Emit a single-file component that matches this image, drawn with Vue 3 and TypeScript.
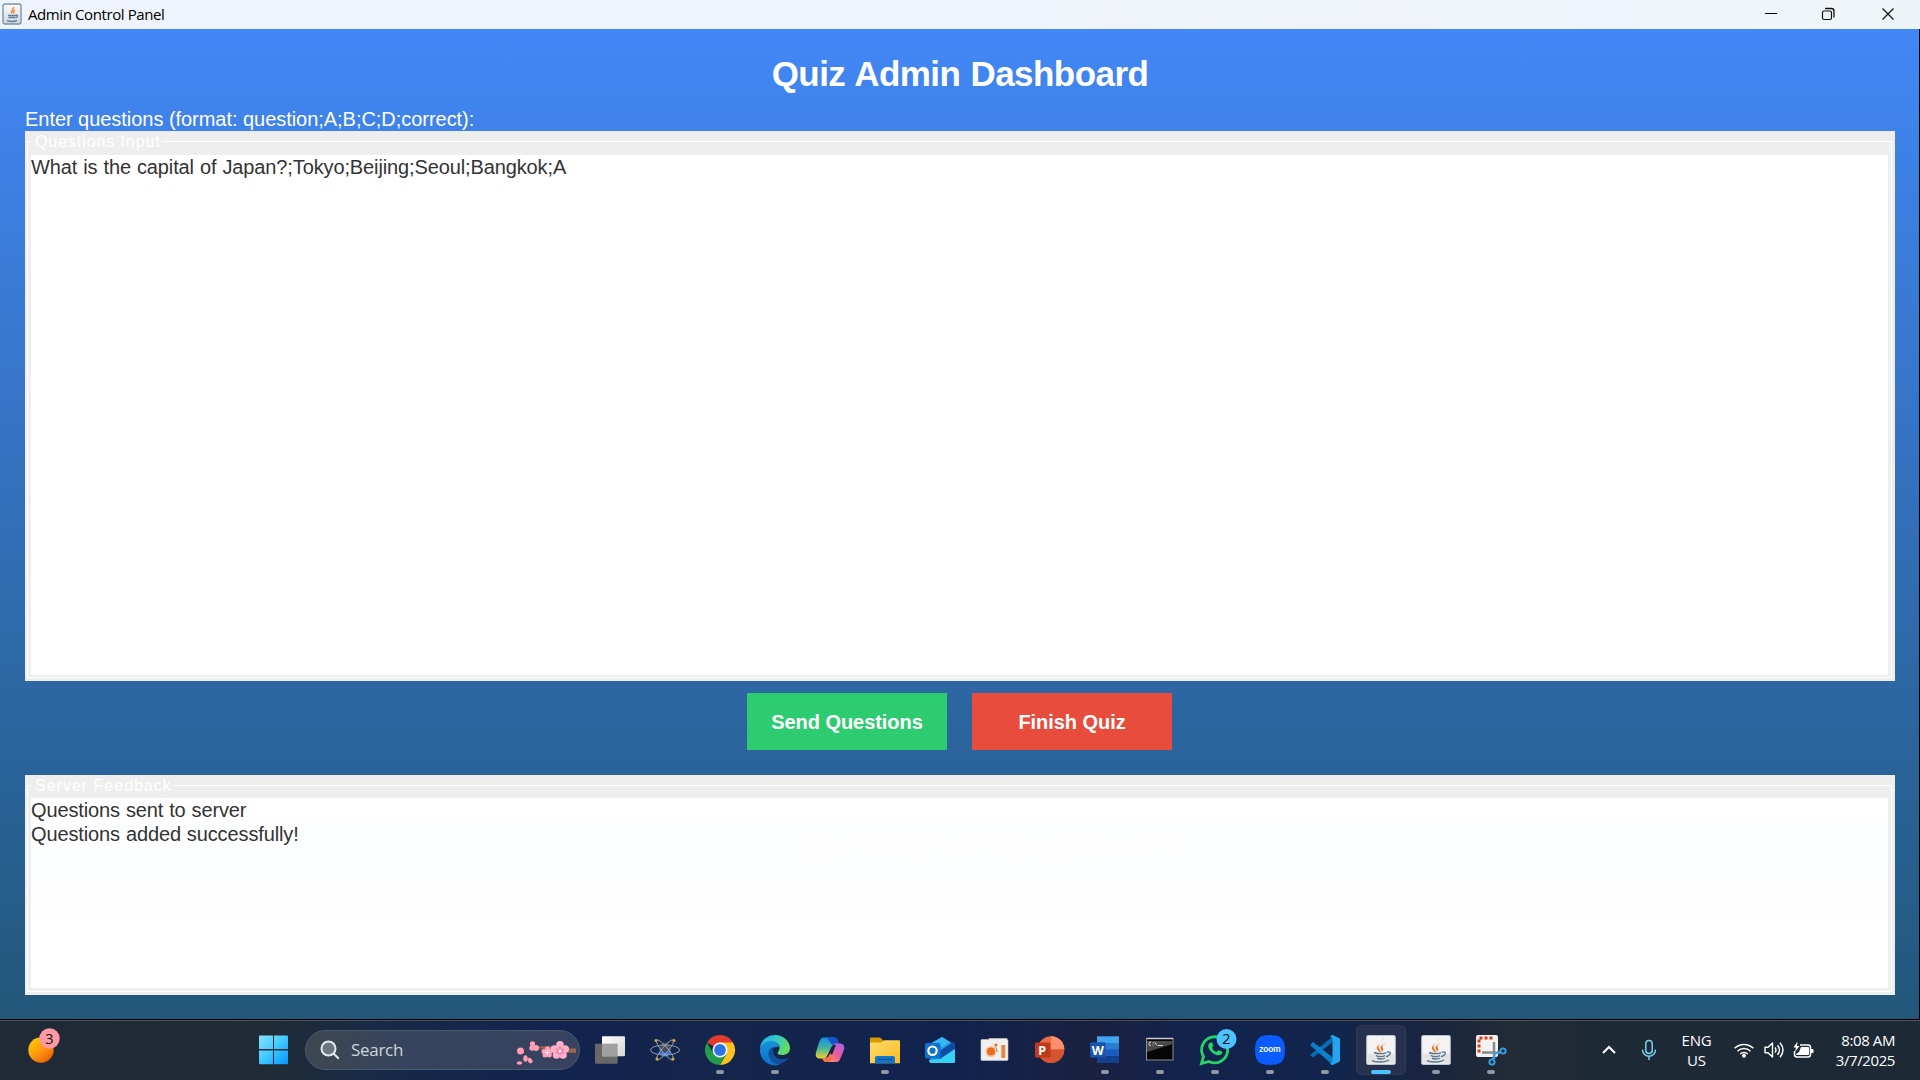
<script setup lang="ts">
import { ref } from 'vue'

const questions = ref('What is the capital of Japan?;Tokyo;Beijing;Seoul;Bangkok;A')
const feedback = ref<string[]>(['Questions sent to server', 'Questions added successfully!'])
</script>

<template>
  <div class="screen">
    <header class="titlebar">
      <svg class="app-icon" width="20" height="22" viewBox="0 0 20 22">
        <defs>
          <linearGradient id="tile" x1="0" y1="0" x2="0" y2="1">
            <stop offset="0" stop-color="#fafafa" />
            <stop offset="1" stop-color="#d3d9de" />
          </linearGradient>
        </defs>
        <rect x="1" y="1" width="18" height="20" rx="2" fill="url(#tile)" stroke="#7e93a3" stroke-width="1.4" />
        <path d="M11.5 4c1 2.500-3.500 3.500-1.500 6.500M13 7c-1.500 1-2 2-1 3.500" fill="none" stroke="#ef8a2d" stroke-width="1.500" />
        <path d="M6 12.500h8M6.500 14.500h6.500M14 12.300c2.500-.5 2 2-.7 2.500M5 17.500c3 1.200 7 1.200 10 0" fill="none" stroke="#5b83a4" stroke-width="1.400" />
      </svg>
      <span class="caption">Admin Control Panel</span>
      <div class="controls">
        <svg width="59" height="29" viewBox="0 0 59 29"><path d="M24 13.500h12" stroke="#000" /></svg>
        <svg width="59" height="29" viewBox="0 0 59 29" fill="none" stroke="#111">
          <rect x="22.500" y="11" width="9" height="8.500" rx="1.500" stroke-width="1.200" />
          <path d="M25 8.500h6.500a2.500 2.500 0 0 1 2.500 2.500v6.500" stroke-width="1.300" />
        </svg>
        <svg width="59" height="29" viewBox="0 0 59 29"><path d="M23.500 8.500l11 11M34.500 8.500l-11 11" stroke="#111" stroke-width="1.200" /></svg>
      </div>
    </header>

    <main class="dashboard">
      <h1>Quiz Admin Dashboard</h1>
      <label class="prompt">Enter questions (format: question;A;B;C;D;correct):</label>
      <section class="group questions">
        <div class="frame">
          <div class="legend"><span>Questions Input</span></div>
          <div class="area"><p class="entry">{{ questions }}</p></div>
        </div>
      </section>
      <div class="actions">
        <button class="send" type="button">Send Questions</button>
        <button class="finish" type="button">Finish Quiz</button>
      </div>
      <section class="group feedback">
        <div class="frame">
          <div class="legend"><span>Server Feedback</span></div>
          <div class="area">
            <p v-for="line in feedback" :key="line">{{ line }}</p>
            <div class="ghost" aria-hidden="true">Quiz Admin Dashboard</div>
          </div>
        </div>
      </section>
    </main>

    <footer class="taskbar">
      <div class="widgets">
        <svg width="34" height="36" viewBox="0 0 34 36">
          <defs>
            <linearGradient id="sun" x1=".1" y1="0" x2=".9" y2="1">
              <stop offset="0" stop-color="#ffd000" />
              <stop offset=".5" stop-color="#fb9a10" />
              <stop offset="1" stop-color="#e65300" />
            </linearGradient>
          </defs>
          <circle cx="15" cy="23" r="12.700" fill="url(#sun)" />
          <circle cx="23.500" cy="11.500" r="10.200" fill="#ff99a4" />
          <text x="23.500" y="16.700" text-anchor="middle" class="badge-text">3</text>
        </svg>
      </div>

      <svg class="start" width="30" height="30" viewBox="0 0 30 30">
        <defs>
          <linearGradient id="win" gradientUnits="userSpaceOnUse" x1="0" y1="0" x2="30" y2="30">
            <stop offset="0" stop-color="#8be0ff" />
            <stop offset=".45" stop-color="#44ccff" />
            <stop offset="1" stop-color="#0091ff" />
          </linearGradient>
        </defs>
        <path fill="url(#win)" d="M1 .5h13V14H0V1.500a1 1 0 0 1 1-1zM15 .5h13a1 1 0 0 1 1 1V14H15zM0 15.500h14v13.800H1a1 1 0 0 1-1-1zM15 15.500h14v12.800a1 1 0 0 1-1 1H15z" />
      </svg>

      <div class="search">
        <svg width="20" height="20" viewBox="0 0 20 20" fill="none" stroke="#e4e8ee" stroke-width="2">
          <circle cx="8.500" cy="8.500" r="7" fill="#6b7580" />
          <path d="M13.500 13.500l5.300 5.300" />
        </svg>
        <span>Search</span>
        <svg class="blossom" width="62" height="26" viewBox="0 0 62 26">
          <path d="M60 7.500v4.500c-9-1-18 1-25-2.500-5-1-10-2-17-3.500 10-1 18-1 24 1z" fill="#9a6549" />
          <path d="M1 10l6-2M17 6l12 4" stroke="#70503f" stroke-width="1" />
          <g fill="#ff9db3">
            <circle cx="4.500" cy="10" r="3.500" /><circle cx="16.500" cy="2.800" r="2.600" /><circle cx="20" cy="7" r="3" /><circle cx="16" cy="7" r="2.700" />
            <ellipse cx="3.500" cy="22" rx="2.800" ry="1.700" /><ellipse cx="9.500" cy="17.500" rx="2.200" ry="3.200" /><ellipse cx="14" cy="19.500" rx="2.200" ry="2.900" transform="rotate(-35 14 19.500)" />
          </g>
          <g fill="#ff9fb9">
            <circle cx="31.500" cy="7.700" r="2.500" /><circle cx="28" cy="10.500" r="2.500" /><circle cx="29" cy="14" r="2.500" /><circle cx="33.300" cy="14" r="2.500" /><circle cx="34.500" cy="10.200" r="2.500" />
          </g>
          <g fill="#ffb0c8">
            <circle cx="44" cy="3.800" r="3.800" /><circle cx="38.500" cy="8" r="3.800" /><circle cx="40.500" cy="14" r="3.800" /><circle cx="47" cy="14" r="3.800" /><circle cx="49.200" cy="8" r="3.800" />
          </g>
          <circle cx="44" cy="10" r="4" fill="#ff9cba" />
          <path d="M31.300 9v5M28.800 11.300h5" stroke="#fff" stroke-width="1" />
          <path d="M44 5.500v8M40 8l8 4M40 12l8-4" stroke="#d8508c" stroke-width=".7" />
          <circle cx="44" cy="10" r="1.500" fill="#fff" />
        </svg>
      </div>

      <nav class="apps">
        <div class="app">
          <svg viewBox="-24 -24 48 48">
            <defs>
              <linearGradient id="tv" x1="0" y1="0" x2="1" y2="1"><stop offset="0" stop-color="#fff" /><stop offset="1" stop-color="#d6d6d6" /></linearGradient>
            </defs>
            <rect x="-15" y="-6.300" width="22.700" height="20" rx="1" fill="#686868" />
            <rect x="-8" y="-13.700" width="23" height="20" rx="1" fill="url(#tv)" />
            <rect x="-8" y="-6.300" width="15.700" height="12.600" fill="#a0a0a0" />
          </svg>
        </div>

        <div class="app">
          <svg viewBox="-24 -24 48 48">
            <circle cy="0" r="6" fill="#2a4f9c" />
            <circle cy="-2.500" r="5" fill="#454d5a" />
            <path d="M-6 1.500a6 5 0 0 0 12 0q-6 2-12 0z" fill="#3678e5" />
            <g fill="none" stroke="#a2a7b4" stroke-width=".9">
              <ellipse rx="14.500" ry="5" />
              <ellipse rx="13" ry="3" transform="rotate(50)" />
              <ellipse rx="13" ry="3" transform="rotate(-50)" />
            </g>
            <g fill="#dba542"><circle cx="-9" cy="-9.500" r="1.500" /><circle cx="9" cy="-9.500" r="1.500" /><circle cx="-8" cy="9" r="1.500" /><circle cx="8" cy="9" r="1.500" /></g>
          </svg>
        </div>

        <div class="app running">
          <svg viewBox="-24 -24 48 48">
            <path d="M0 0L-13-7.500A15 15 0 0 1 13-7.500z" fill="#e33b2e" />
            <path d="M0-7.500H13A15 15 0 0 1 0 15L6.500 3.700z" fill="#fcc31e" />
            <path d="M-13-7.500A15 15 0 0 0 0 15L6.500 3.700-6.500 3.700z" fill="#229b4c" />
            <circle r="7.500" fill="#fff" /><circle r="5.900" fill="#2a75e6" />
          </svg>
        </div>

        <div class="app running">
          <svg viewBox="-24 -24 48 48">
            <defs>
              <linearGradient id="edge1" x1="0" y1=".3" x2="1" y2=".6"><stop offset="0" stop-color="#25b1e8" /><stop offset=".5" stop-color="#35c9c2" /><stop offset="1" stop-color="#6be04e" /></linearGradient>
              <linearGradient id="edge2" x1=".3" y1="0" x2=".3" y2="1"><stop offset="0" stop-color="#1793da" /><stop offset="1" stop-color="#0b6fd0" /></linearGradient>
            </defs>
            <path d="M-15-1C-15-9-8-15 0-15 9-15 15-8 15-2c0 5-4 7-8 7-4 0-5-1.500-4-3C7-4 3-8-3-8c-7 0-11 4-12 7z" fill="url(#edge1)" />
            <path d="M-15 0c1-6 6-9 11-9 4 0 8 2 8 6C-1-4-4-1-4 4c0 5 4 10 9 10.500A15 15 0 0 1-15 0z" fill="url(#edge2)" />
            <path d="M-2-3c-5 2-6 8-3 12 3 5 9 7 14 3 2-1 4-3 4-4-1-.500-4 2-8 1C0 8-3 3-2-3z" fill="#11509b" />
          </svg>
        </div>

        <div class="app">
          <svg viewBox="-24 -24 48 48">
            <defs>
              <linearGradient id="cop1" x1="0" y1="0" x2="0" y2="1"><stop offset="0" stop-color="#168be8" /><stop offset=".5" stop-color="#42b69a" /><stop offset="1" stop-color="#f5cc2d" /></linearGradient>
              <linearGradient id="cop2" x1="1" y1="0" x2="0" y2="1"><stop offset="0" stop-color="#a65df4" /><stop offset=".5" stop-color="#f05b93" /><stop offset="1" stop-color="#ffaf66" /></linearGradient>
            </defs>
            <path d="M-6-12.500H4c2 0 3 1 4 4L9-5H5C2-5 1-3 0 0L-3 6c-1 2-2 2.500-4 2.500h-3c-3 0-5-2-4-6l3-10c1-3 2-5 5-5z" fill="url(#cop1)" />
            <path d="M-3-12.500H4c2 0 3 1 4 4L9-5H4C1-5 0-8-3-12.500z" fill="#1753cb" />
            <path d="M6 12H-4c-2 0-3-2-4-4h3c3 0 4-2 5-5L3-4c1-2 2-2.500 4-2.500h3c3 0 5 2 4 6L11 7c-1 3-2 5-5 5z" fill="url(#cop2)" />
            <path d="M-1 3l4-8h3L2 5z" fill="#18204a" />
            <path d="M-8 8h4c2 0 4-2 5-5l1 6-3 3h-3c-2 0-3-2-4-4z" fill="#f07542" />
          </svg>
        </div>

        <div class="app running">
          <svg viewBox="-24 -24 48 48">
            <defs><linearGradient id="fold" x1="0" y1="0" x2="1" y2="1"><stop offset="0" stop-color="#ffdc6c" /><stop offset="1" stop-color="#fdbb22" /></linearGradient></defs>
            <path d="M-15-11.500q0-1 1-1h9l3 2.700V-5h-13z" fill="#d89800" />
            <path d="M-15-7.500h11l3-2.200H14q1 0 1 1v22h-30z" fill="url(#fold)" />
            <path d="M-10 13.300V8q0-2 2-2H8q2 0 2 2v5.300z" fill="#1277c9" />
            <path d="M-7 9.500H7" stroke="#0a4f91" stroke-width="1.200" />
          </svg>
        </div>

        <div class="app">
          <svg viewBox="-24 -24 48 48">
            <path d="M-10-6L2-13 15-5V13H-10z" fill="#279de4" />
            <path d="M-10-6L2-13l8 5-15 9z" fill="#33b8f3" />
            <path d="M-5 4L13-8l2 1v6L0 9z" fill="#104ca5" />
            <path d="M15-1v12q0 2-2 2H-8q-3 0-3-3L0 9z" fill="#34d1f3" />
            <rect x="-15" y="-7" width="15.500" height="15.500" rx="1.500" fill="#0b73ce" />
            <circle cx="-7.500" cy=".7" r="4.200" fill="none" stroke="#fff" stroke-width="2.200" />
          </svg>
        </div>

        <div class="app">
          <svg viewBox="-24 -24 48 48">
            <path d="M-14-9.500q0-1 1-1h7v-1h18v1q1 0 1 1V9.500q0 1-1 1h-25q-1 0-1-1z" fill="#f1efed" stroke="#c7c9ce" stroke-width=".6" />
            <circle cx="-4" cy="1.500" r="4.800" fill="#eb6d1a" stroke="#f7c7a5" stroke-width="1.500" />
            <path d="M0-3a5 5 0 0 1 2 5" fill="none" stroke="#8c8c8c" />
            <circle cx="1" cy="-5" r="1.600" fill="#eb6d1a" />
            <rect x="6.300" y="-5" width="4" height="13" fill="#ed8440" />
          </svg>
        </div>

        <div class="app">
          <svg viewBox="-24 -24 48 48">
            <circle cx="1" cy="-.5" r="13.300" fill="#ec6c47" />
            <path d="M1-13.800A13.300 13.300 0 0 1 14.300-.5H1z" fill="#ff8f6b" />
            <path d="M-12.300-.5H14.300A13.300 13.300 0 0 1-12.300-.5z" fill="#d6532f" />
            <rect x="-15" y="-7.500" width="15.500" height="15" rx="1.300" fill="#c13b1b" />
            <text x="-7.800" y="4.500" text-anchor="middle" class="glyph">P</text>
          </svg>
        </div>

        <div class="app running">
          <svg viewBox="-24 -24 48 48">
            <rect x="-8" y="-13.700" width="22" height="6.800" fill="#43a5ee" />
            <rect x="-8" y="-7" width="22" height="6.800" fill="#2a7cd5" />
            <rect x="-8" y="-.3" width="22" height="6.800" fill="#1b5dbe" />
            <rect x="-8" y="6.300" width="22" height="6.700" fill="#14418f" />
            <rect x="-15" y="-7.700" width="15.500" height="15.200" rx="1.300" fill="#1955b0" />
            <text x="-7.300" y="4.500" text-anchor="middle" class="glyph">W</text>
          </svg>
        </div>

        <div class="app running">
          <svg viewBox="-24 -24 48 48">
            <rect x="-13.500" y="-11.500" width="26.500" height="21.500" fill="#050505" stroke="#8d9095" />
            <path d="M-13-9H12.500V-6L-13 2z" fill="#4a4a4a" />
            <path d="M-13.500-11.500H13" stroke="#c9ccd0" stroke-width="1.500" />
            <path d="M-9-8h-1.500q-1 2 0 3.500H-9M-7-7.500v.9M-7-5.400v.9M-5.500-8l2.500 3.500M-2-4.500h5" fill="none" stroke="#ddd" stroke-width=".9" />
          </svg>
        </div>

        <div class="app running">
          <svg viewBox="-24 -24 48 48">
            <path d="M-13.500 13.500l2-7A13 13 0 1 1-6 11.500z" fill="none" stroke="#25d366" stroke-width="2.800" />
            <path d="M-4.500-7.500c-3 1.500-3 5 0 8.500s7 5.500 10.500 3.500c1.500-1 1.500-2.500 1-3L3.500 0 1.500 2C-1 1-2-.5-3-2.500l1.500-2L-3-7.500z" fill="#25d366" />
            <circle cx="11.500" cy="-11" r="10" fill="#4cc2ff" />
            <text x="11.500" y="-5.700" text-anchor="middle" class="badge-text">2</text>
          </svg>
        </div>

        <div class="app running">
          <svg viewBox="-24 -24 48 48">
            <path d="M0-15C11-15 15-11 15 0S11 15 0 15-15 11-15 0-11-15 0-15z" fill="#0b5cff" />
            <text x="0" y="2" text-anchor="middle" class="zoom-text" textLength="21.500" lengthAdjust="spacingAndGlyphs">zoom</text>
          </svg>
        </div>

        <div class="app running">
          <svg viewBox="-24 -24 48 48">
            <path d="M-15 5l3 2.500L9-9v-5.500z" fill="#0a6cb2" />
            <path d="M-15-5l3-3L9 8.500V15L6 13.500z" fill="#0e7fc9" />
            <path d="M7.500-15l6.500 3q1 .5 1 1.500v21q0 1-1 1.500L7.500 15q-1.500 0-2.500-1.500L7.500 12V-12L5-13.500Q6-15 7.500-15z" fill="#24a5ef" />
          </svg>
        </div>

        <div v-for="n in 2" :key="n" class="app running" :class="{ active: n === 1 }">
          <svg viewBox="-24 -24 48 48">
            <rect x="-14.300" y="-14.500" width="28.600" height="29" rx="1.500" fill="#f3f3f3" stroke="#b9c4cd" />
            <path d="M-13.500 4h27v9.500h-27z" fill="#e3e3e3" />
            <path d="M2-12.500C4-8-4.500-6-2-1.500-.5 1 0 2 0 3c-4-3-5.500-5-3-7.500S2.500-8 2-12.500zM5-7C1-5 1-4 2-2 3 0 1.500 1.500.5 2c1-2-2-3-1-5S3-6.500 5-7z" fill="#e9782b" />
            <path d="M-7 2.500C-4 4 3 4 5.500 2.500M-5 5.500C-3 7 2 7 4 5.500M-4 8.200C-2 9.300 2 9.300 4 8M-9 10.500c3 2 13 2 17-.5M6 2.200c5-1.500 4 3-1 4.500" fill="none" stroke="#57778f" stroke-width="1.400" />
          </svg>
        </div>

        <div class="app running">
          <svg viewBox="-24 -24 48 48">
            <rect x="-15" y="-15" width="22" height="22" rx="2" fill="#f2f2f2" />
            <path d="M-12 2.500V-12H2" fill="none" stroke="#d83b12" stroke-width="3" stroke-dasharray="3 2" />
            <path d="M-9 2.500H9M3-8V9" fill="none" stroke="#878b90" stroke-width="2.500" />
            <g fill="none" stroke="#2fa3e6" stroke-width="1.900"><circle cx="12" cy="1" r="2.600" /><circle cx="1" cy="12" r="2.600" /><path d="M9.500 2L4 3.500 2 9.500" /></g>
          </svg>
        </div>
      </nav>

      <div class="tray">
        <svg class="chevron" width="16" height="12" viewBox="0 0 16 12"><path d="M2 9l6-6 6 6" fill="none" stroke="#fff" stroke-width="2" /></svg>
        <svg class="mic" width="16" height="22" viewBox="0 0 16 22" fill="none" stroke="#78cfe8" stroke-width="1.500">
          <rect x="4.800" y="1.500" width="6.400" height="13" rx="3.200" /><path d="M1.500 10.500c0 9 13 9 13 0M8 17.500V21" />
        </svg>
        <div class="lang"><span>ENG</span><span>US</span></div>
        <svg class="wifi" width="20" height="16" viewBox="0 0 20 16" fill="none" stroke="#fff" stroke-width="1.500">
          <path d="M.7 6.300a13.200 13.200 0 0 1 18.600 0M3.500 9.200a9.200 9.200 0 0 1 13 0M6.200 12a5.400 5.400 0 0 1 7.600 0" /><circle cx="10" cy="13.700" r="1.200" fill="#fff" />
        </svg>
        <svg class="speaker" width="20" height="18" viewBox="0 0 20 18" fill="none" stroke="#fff" stroke-width="1.400">
          <path d="M1 6.300h3L8.500 2v14L4 11.700H1z" stroke-linejoin="round" /><path d="M11 6.500q2 2.500 0 5M13.500 4.200q4 4.800 0 9.600M16 1.700q6 7.300 0 14.600" />
        </svg>
        <svg class="battery" width="21" height="18" viewBox="0 0 21 18">
          <path d="M7 4h8a2.500 2.500 0 0 1 2.500 2.500v7A2.500 2.500 0 0 1 15 16H4a2.500 2.500 0 0 1-2.500-2.500V10" fill="none" stroke="#fff" stroke-width="1.500" />
          <path d="M8 6h7q1 0 1 1v6q0 1-1 1H4q-1 0-1-1l3-2z" fill="#fff" /><path d="M18 8h1.500q1 0 1 1v2q0 1-1 1H18z" fill="#fff" />
          <path d="M4.500.5L.5 6.500H3L2 11l4.500-6H4z" fill="#fff" />
        </svg>
        <div class="clock"><span>8:08 AM</span><span>3/7/2025</span></div>
      </div>
    </footer>
  </div>
</template>

<style>
body {
  margin: 0;
  background: #000;
}
</style>

<style scoped>
.screen {
  width: 1920px;
  height: 1080px;
  display: flex;
  flex-direction: column;
  overflow: hidden;
  font-family: 'Liberation Sans', Arial, sans-serif;
  background: #000;
}
svg {
  display: block;
  flex: none;
}

.titlebar {
  height: 29px;
  flex: none;
  display: flex;
  align-items: center;
  background: linear-gradient(90deg, #eff3fb 0, #eff3fb 54%, #eff4f8 62%, #eff3fb 84%, #eff5f9 94%, #edf4f7);
}
.app-icon {
  margin: -1px 0 0 2px;
}
.caption {
  margin-left: 6px;
  font: 15px/29px 'Open Sans', 'Noto Sans', sans-serif;
  letter-spacing: -0.4px;
  color: #000;
}
.controls {
  display: flex;
  margin-left: auto;
  margin-right: 2px;
}

.dashboard {
  box-sizing: border-box;
  width: 1919px;
  height: 990px;
  flex: none;
  display: flex;
  flex-direction: column;
  padding: 25px 24px 24px 25px;
  background: linear-gradient(#4287f6, #22577a);
}
h1 {
  margin: 0;
  font-size: 35px;
  line-height: 40px;
  letter-spacing: -0.55px;
  word-spacing: 1px;
  text-align: center;
  color: #fff;
}
.prompt {
  margin-top: 13px;
  height: 24px;
  font-size: 20px;
  line-height: 24px;
  letter-spacing: -0.04px;
  color: #fff;
}
.group {
  box-sizing: border-box;
  background: #eee;
  padding: 10px 3px 3px 2px;
}
.questions {
  height: 550px;
}
.frame {
  box-sizing: border-box;
  height: 100%;
  display: flex;
  flex-direction: column;
  border: 1px solid #fff;
  padding: 0 3px 2px;
}
.legend {
  height: 13px;
  flex: none;
}
.legend span {
  display: inline-block;
  margin-top: -10px;
  height: 20px;
  padding: 0 1px 0 4px;
  background: #eee;
  font-size: 16px;
  line-height: 20px;
  letter-spacing: 0.9px;
  color: #fff;
  vertical-align: top;
}
.area {
  flex: 1;
  background: #fff;
  font-size: 20px;
  line-height: 24px;
  color: #333;
}
.area p {
  margin: 0;
  letter-spacing: -0.12px;
  word-spacing: 0.5px;
}
.area .entry {
  letter-spacing: -0.12px;
  word-spacing: 0.6px;
}
.actions {
  display: flex;
  justify-content: center;
  gap: 25px;
  margin: 12px 1px 25px 0;
}
button {
  width: 200px;
  height: 57px;
  padding: 1px 0 0;
  border: 0;
  font: bold 20px/56px 'Liberation Sans', Arial, sans-serif;
  letter-spacing: -0.05px;
  color: #fff;
}
.send {
  background: #2ecc71;
}
.finish {
  background: #e74c3c;
}
.feedback {
  height: 220px;
}
.feedback .legend {
  height: 12px;
}
.feedback .legend span {
  letter-spacing: 1px;
}
.feedback .frame {
  padding-bottom: 3px;
}
.feedback .area {
  background: linear-gradient(#fff 0, #fff 22px, #fcfeff 24px, #fdfeff 75px, #fefefe 100px, #fff 150px);
}
.ghost {
  margin-top: -21px;
  padding-left: 62px;
  text-align: center;
  font-size: 35px;
  font-weight: bold;
  line-height: 40px;
  letter-spacing: -0.4px;
  color: #fff;
}

.taskbar {
  box-sizing: border-box;
  height: 60px;
  margin-top: 1px;
  padding-bottom: 1px;
  flex: none;
  display: flex;
  align-items: center;
  border-top: 1px solid #4a525a;
  background: linear-gradient(90deg, #1f2a36 0, #202b36 270px, #182a45 360px, #11234f 560px, #14264b 700px, #11234d 960px, #1a2140 1090px, #12234d 1200px, #12254b 1340px, #1a2540 1430px, #222b36 1510px, #1e2936 1600px, #1e2936);
}
.widgets {
  width: 233px;
  box-sizing: border-box;
  padding-left: 26px;
}
.widgets svg {
  margin-top: -10px;
}
.start {
  margin-left: 26px;
}
.search {
  box-sizing: border-box;
  width: 275px;
  height: 40px;
  margin-left: 16px;
  padding-left: 14px;
  display: flex;
  align-items: center;
  flex: none;
  border: 1px solid #4c5a70;
  border-radius: 20px;
  background: linear-gradient(90deg, #3d4750, #36445d 35%, #36425f);
}
.search span {
  margin-left: 11px;
  font: 17px/36px 'Open Sans', 'Noto Sans', sans-serif;
  letter-spacing: -0.3px;
  color: #cfd5dd;
}
.blossom {
  margin: 7px 1px 0 auto;
}
.apps {
  display: flex;
  margin-left: 2.5px;
  flex: none;
}
.app {
  position: relative;
  width: 55px;
  height: 50px;
  display: flex;
  align-items: center;
  justify-content: center;
  flex: none;
}
.app.active {
  margin-left: 1px;
}
.app svg {
  position: relative;
  width: 48px;
  height: 48px;
  overflow: visible;
}
.running::after {
  content: '';
  position: absolute;
  left: 50%;
  bottom: 1px;
  width: 8px;
  height: 4px;
  margin-left: -4px;
  border-radius: 2px;
  background: #9097a7;
}
.active::before {
  content: '';
  position: absolute;
  inset: 0 2.5px;
  box-sizing: border-box;
  border: 1px solid #303a58;
  border-radius: 5px;
  background: #27304d;
}
.active::after {
  width: 20px;
  margin-left: -10px;
  background: #4cc2ff;
}
.badge-text {
  font: 14.5px 'Open Sans', 'Noto Sans', sans-serif;
  fill: #111;
}
.glyph {
  font: bold 12.5px 'Open Sans', 'Noto Sans', sans-serif;
  fill: #fff;
}
.zoom-text {
  font: bold 9px 'Lato', 'Open Sans', sans-serif;
  fill: #fff;
}
.tray {
  display: flex;
  align-items: center;
  flex: 1;
  padding-right: 25px;
  color: #fff;
  font: 15px/20px 'Open Sans', 'Noto Sans', sans-serif;
}
.chevron {
  margin-left: 82px;
}
.mic {
  margin-left: 24px;
}
.lang {
  width: 40px;
  margin: -1px 0 0 20px;
  display: flex;
  flex-direction: column;
  align-items: center;
  letter-spacing: -0.2px;
}
.wifi {
  margin-left: 17px;
}
.speaker {
  margin-left: 10px;
}
.battery {
  margin-left: 9px;
}
.clock {
  margin: -1px 0 0 auto;
  display: flex;
  flex-direction: column;
  align-items: flex-end;
  letter-spacing: -0.4px;
}
</style>
